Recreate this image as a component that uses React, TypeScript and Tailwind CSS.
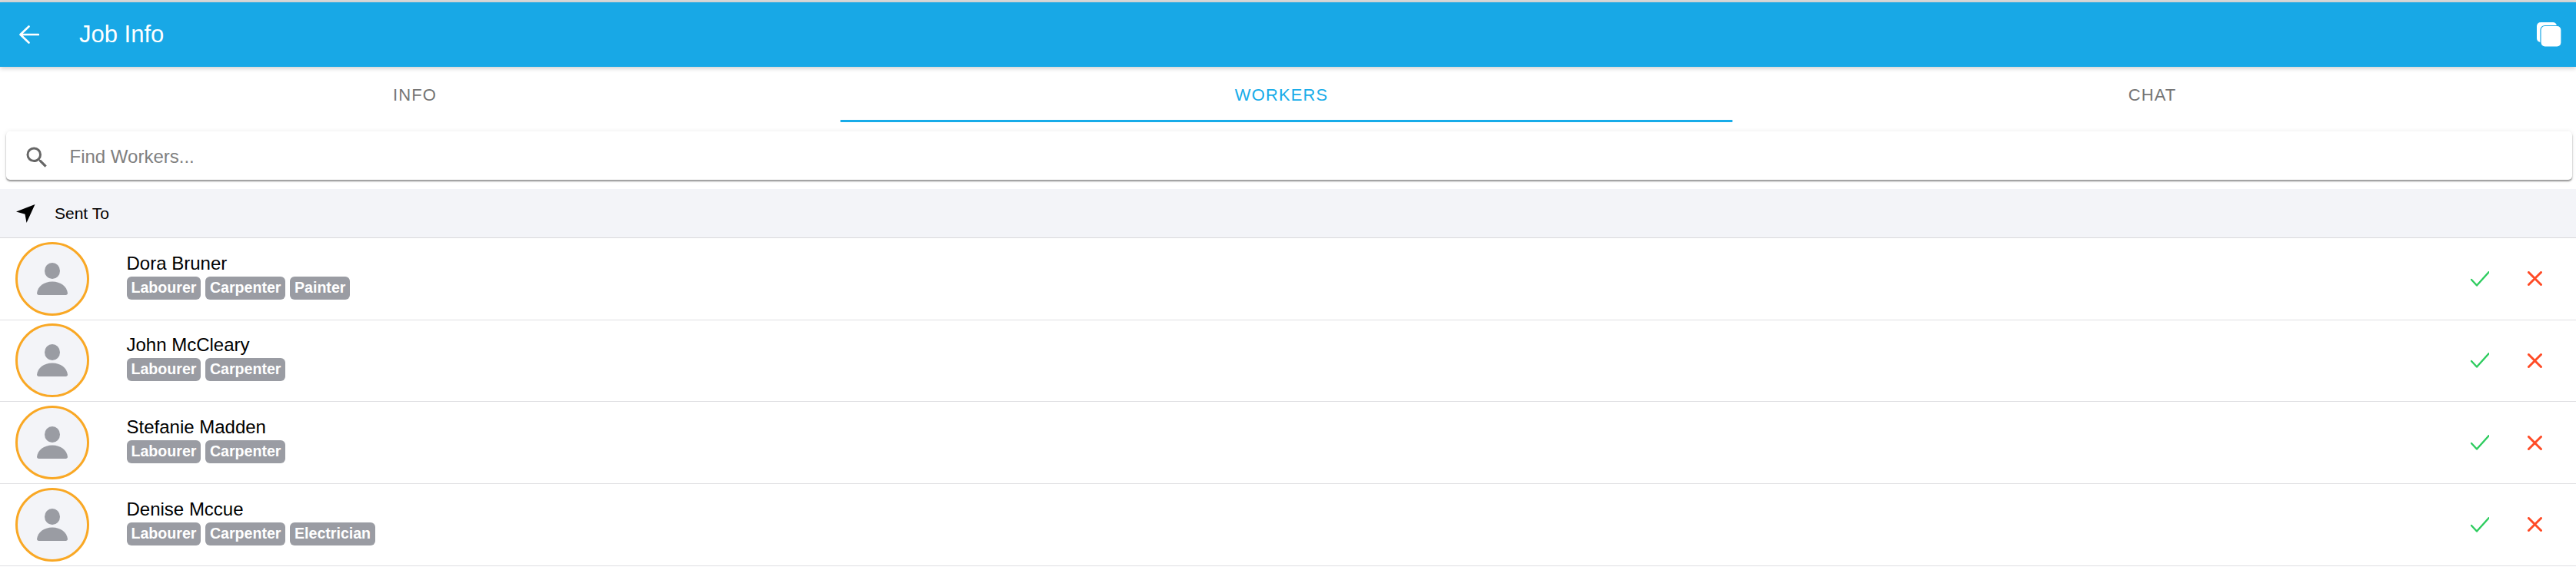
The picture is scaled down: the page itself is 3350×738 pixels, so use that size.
const workers = [
  { name: "Dora Bruner", trades: ["Labourer", "Carpenter", "Painter"] },
  { name: "John McCleary", trades: ["Labourer", "Carpenter"] },
  { name: "Stefanie Madden", trades: ["Labourer", "Carpenter"] },
  { name: "Denise Mccue", trades: ["Labourer", "Carpenter", "Electrician"] },
];

function PersonIcon() {
  return (
    <svg width="40" height="42" viewBox="0 0 40 42" className="text-[#9a9ca3]" fill="currentColor">
      <ellipse cx="20" cy="10.5" rx="10" ry="10.5" />
      <path d="M0 39.5C1 31 9 24.5 20 24.5S39 31 40 39.5C40 41 39 42 37.5 42H2.5C1 42 0 41 0 39.5Z" />
    </svg>
  );
}

function WorkerRow({ name, trades }: { name: string; trades: string[] }) {
  return (
    <div className="flex h-[106.67px] items-center border-b border-[#dfdfe2] pl-5 pr-11">
      <div className="flex h-24 w-24 shrink-0 items-center justify-center rounded-full border-[3px] border-[#f9a825] bg-[#f3f4f8]">
        <PersonIcon />
      </div>
      <div className="mb-[7px] ml-[48.5px] flex-1">
        <div className="text-[24px] leading-[28px] text-black">{name}</div>
        <div className="mt-[3px] flex gap-[5.5px]">
          {trades.map((t) => (
            <span key={t} className="h-[30px] rounded-[6px] bg-[#9a9ca3] px-[6px] text-[19.6px] leading-[29px] font-bold text-white">
              {t}
            </span>
          ))}
        </div>
      </div>
      <div className="flex items-center gap-[50px]">
        <svg width="24" height="20" viewBox="0 0 24 20" fill="none" stroke="#2ecc5f" strokeWidth="2.4" strokeLinecap="round" strokeLinejoin="round">
          <path d="M1 11L8 18.5L23.5 1.2" />
        </svg>
        <svg width="19" height="19" viewBox="0 0 19 19" fill="none" stroke="#ff4b26" strokeWidth="3" strokeLinecap="round">
          <path d="M1.5 1.5L17.5 17.5M17.5 1.5L1.5 17.5" />
        </svg>
      </div>
    </div>
  );
}

export default function App() {
  return (
    <div className="min-h-[738px] bg-white font-['Liberation_Sans',sans-serif]">
      <div className="h-[3px] bg-[#d9d9d9]" />
      <header className="relative z-10 flex h-[84px] items-center bg-[#18a8e6] pl-[25px] pr-[19px] text-white shadow-[0_2px_6px_rgba(0,0,0,0.2)]">
        <svg width="26" height="24" viewBox="0 0 26 24" fill="none" stroke="#fff" strokeWidth="2.6" strokeLinecap="round" strokeLinejoin="round">
          <path d="M25 12H2M12.5 1.5L1.5 12L12.5 22.5" />
        </svg>
        <h1 className="ml-[52px] flex-1 text-[31px]">Job Info</h1>
        <svg width="32" height="32" viewBox="0 0 32 32">
          <rect x="0" y="0" width="26" height="26" rx="5" fill="#fff" />
          <rect x="5" y="4.5" width="27" height="27.5" rx="5.5" fill="#fff" stroke="#18a8e6" strokeWidth="1.2" />
        </svg>
      </header>

      <nav className="flex h-[72px] text-[22px] tracking-[1.1px]">
        <button className="flex w-[1093px] items-center justify-center pr-[14px] text-[#757575]">INFO</button>
        <button className="flex w-[1160px] items-center justify-center border-b-[3px] border-[#18ace9] pt-[3px] pr-[13px] text-[#18ace9]">WORKERS</button>
        <button className="flex flex-1 items-center justify-center pr-[5px] text-[#757575]">CHAT</button>
      </nav>

      <div className="mt-3 mr-[5px] ml-2 flex h-[63px] items-center rounded-[5px] bg-white pl-[21.5px] shadow-[0_2px_2px_rgba(0,0,0,0.4),0_0_6px_rgba(0,0,0,0.08)]">
        <svg width="36" height="36" viewBox="0 0 24 24" fill="#666" className="mt-[4px]">
          <path d="M15.5 14h-.79l-.28-.27A6.47 6.47 0 0 0 16 9.5 6.5 6.5 0 1 0 9.5 16c1.61 0 3.09-.59 4.23-1.57l.27.28v.79l5 4.99L20.49 19l-4.99-5zm-6 0C7.01 14 5 11.99 5 9.5S7.01 5 9.5 5 14 7.01 14 9.5 11.99 14 9.5 14z" />
        </svg>
        <span className="mt-[2px] ml-[25px] text-[24px] text-[#808080]">Find Workers...</span>
      </div>

      <div className="mt-3 flex h-[64px] items-center border-b border-[#d9d9dc] bg-[#f3f4f8] pl-[21px]">
        <svg width="25" height="24" viewBox="0 0 25 24" fill="#000">
          <path d="M24.5 0L0 9.5L11.5 12.8L13.5 24Z" />
        </svg>
        <span className="ml-[25px] text-[21px] text-black">Sent To</span>
      </div>

      {workers.map((w) => (
        <WorkerRow key={w.name} name={w.name} trades={w.trades} />
      ))}
    </div>
  );
}
